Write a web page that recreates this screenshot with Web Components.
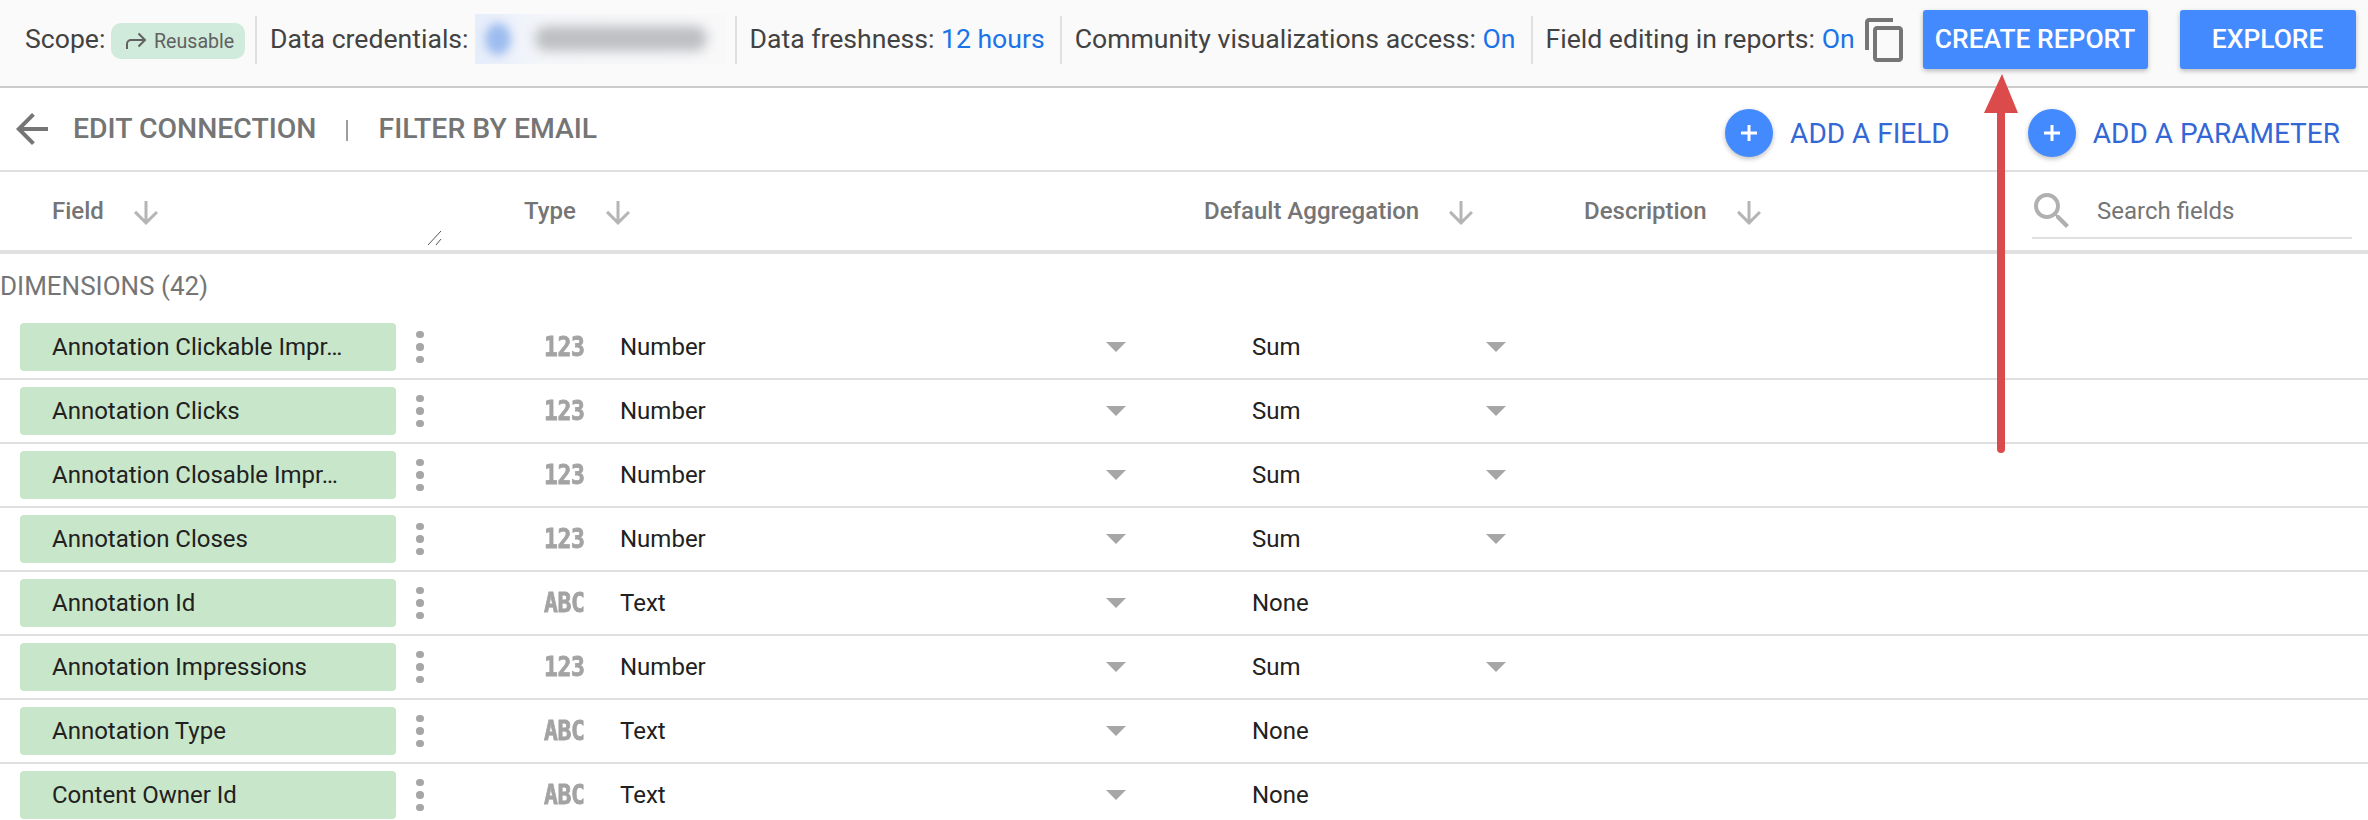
<!DOCTYPE html>
<html><head><meta charset="utf-8"><style>
html,body{margin:0;padding:0;background:#fff;overflow:hidden;width:2368px;height:820px;font-family:Roboto,"Liberation Sans",sans-serif}
</style></head><body>
<dc-page></dc-page>
<script>
const tmpl=(html)=>{const t=document.createElement('template');t.innerHTML=html;return t};
const def=(name,html,init)=>{const t=tmpl(html);customElements.define(name,class extends HTMLElement{connectedCallback(){if(this.shadowRoot)return;const r=this.attachShadow({mode:'open'});r.appendChild(t.content.cloneNode(true));if(init)init(r,this)}})};
const P={copy:'M16 1H4c-1.1 0-2 .9-2 2v14h2V3h12V1zm3 4H8c-1.1 0-2 .9-2 2v14c0 1.1.9 2 2 2h11c1.1 0 2-.9 2-2V7c0-1.1-.9-2-2-2zm0 16H8V7h11v14z',
back:'M20 11H7.83l5.59-5.59L12 4l-8 8 8 8 1.41-1.41L7.83 13H20v-2z',
down:'M20 12l-1.41-1.41L13 16.17V4h-2v12.17l-5.58-5.59L4 12l8 8 8-8z',
search:'M15.5 14h-.79l-.28-.27C15.41 12.59 16 11.11 16 9.5 16 5.91 13.09 3 9.5 3S3 5.91 3 9.5 5.91 16 9.5 16c1.61 0 3.09-.59 4.23-1.57l.27.28v.79l5 4.99L20.49 19l-4.99-5zm-6 0C7.01 14 5 11.99 5 9.5S7.01 5 9.5 5 14 7.01 14 9.5 11.99 14 9.5 14z'};
def('dc-icon',`<style>:host{display:inline-flex;flex:none}svg{display:block;width:var(--s,48px);height:var(--s,48px);fill:var(--c,#757575)}</style><svg viewBox="0 0 24 24"><path></path></svg>`,(r,h)=>r.querySelector('path').setAttribute('d',P[h.getAttribute('name')]));
def('dc-setting',`<style>:host{display:flex;align-items:center;height:48px;padding:0 15px 2px 13px;box-sizing:border-box;border-left:2px solid #e0e0e0;font-size:26.6px;color:#424242;white-space:nowrap;flex:none}</style><slot></slot>`);
def('dc-btn',`<style>:host{display:flex;align-items:center;justify-content:center;height:59px;padding-bottom:2px;background:#448aff;color:#fff;border-radius:3px;font-size:26.4px;font-weight:500;box-shadow:0 2px 5px rgba(0,0,0,.26);box-sizing:border-box;white-space:nowrap;flex:none}</style><slot></slot>`);
def('dc-toolbar',`<style>
:host{display:flex;align-items:center;padding:0 12px 7px 25px;box-sizing:border-box;height:88px;background:#fafafa;border-bottom:2px solid #ccc;font-size:26.6px;color:#424242}
.scope{white-space:nowrap;width:86px;flex:none;margin-bottom:2px}
.chip{display:flex;align-items:center;gap:7px;flex:none;width:134px;height:36px;margin-top:3px;box-sizing:border-box;padding-left:14px;background:#d0ebdb;border-radius:10px;font-size:19.600px;color:#616161;margin-right:10px;white-space:nowrap}
.chip svg{width:22px;height:18px;fill:none;stroke:#616161;stroke-width:2}
.blur{width:251px;height:50px;background:linear-gradient(90deg,#e6edfb,#f6f7fa 30%,#f8f8f9);overflow:hidden;margin:0 -6px 0 6px;display:flex;align-items:center;gap:24px;padding-left:10px;box-sizing:border-box;flex:none}
.b1{width:26px;height:32px;border-radius:50%;background:#9dbcef;filter:blur(5px);flex:none}
.b2{width:172px;height:25px;background:#bdbfc2;border-radius:12px;filter:blur(6px);flex:none}
b{font-weight:400;color:#1a73e8}
.copy{margin-left:-9px;margin-right:14px}
.cr{width:225px}
.ex{width:176px;margin-left:32px}
</style>
<span class="scope">Scope:</span>
<span class="chip"><svg viewBox="0 0 22 18"><path d="M2 17v-5a4 4 0 0 1 4-4h14M13.500 1.500l6.500 6.500-6.500 6.500"/></svg>Reusable</span>
<dc-setting>Data credentials:<span class="blur"><i class="b1"></i><i class="b2"></i></span></dc-setting>
<dc-setting>Data freshness:&nbsp;<b>12 hours</b></dc-setting>
<dc-setting>Community visualizations access:&nbsp;<b>On</b></dc-setting>
<dc-setting>Field editing in reports:&nbsp;<b>On</b></dc-setting>
<dc-icon class="copy" name="copy"></dc-icon>
<dc-btn class="cr">CREATE REPORT</dc-btn>
<dc-btn class="ex">EXPLORE</dc-btn>`);
def('dc-add',`<style>:host{display:flex;align-items:center;gap:17px;font-size:28px;color:#3367d6;white-space:nowrap}
.c{width:48px;height:48px;border-radius:50%;background:#448aff;box-shadow:0 2px 5px rgba(0,0,0,.26);display:flex;align-items:center;justify-content:center}
svg{width:16px;height:16px;fill:#fff}</style>
<span class="c"><svg viewBox="0 0 16 16"><path d="M6.500 0h3v6.500H16v3H9.500V16h-3V9.500H0v-3h6.500z"/></svg></span><slot></slot>`);
def('dc-connbar',`<style>:host{display:flex;align-items:center;height:84px;box-sizing:border-box;border-bottom:2px solid #e0e0e0;padding:0 28px 0 8px;font-size:28.4px;font-weight:500;color:#757575;white-space:nowrap}
.t{margin-left:17px}.tx{margin-bottom:2px}.p{width:2px;height:21px;background:#9e9e9e;margin:3px 31px 0 29px}
.sp{flex:1}dc-add{font-weight:400;margin-top:8px}dc-add+dc-add{margin-left:78px}</style>
<dc-icon name="back"></dc-icon><span class="t tx">EDIT CONNECTION</span><span class="p"></span><span class="tx">FILTER BY EMAIL</span><span class="sp"></span>
<dc-add>ADD A FIELD</dc-add><dc-add>ADD A PARAMETER</dc-add>`);
def('dc-col',`<style>:host{display:flex;align-items:center;gap:var(--g,30px);font-size:24px;font-weight:500;color:#757575;white-space:nowrap}
dc-icon{--s:36px;--c:#b5b5b5;margin-top:3px;margin-left:-6px}</style><slot></slot><dc-icon name="down"></dc-icon>`);
def('dc-header',`<style>:host{display:grid;grid-template-columns:472px 680px 380px 444px 1fr;align-items:center;height:82px;box-sizing:border-box;padding-left:52px;border-bottom:4px solid #e0e0e0;position:relative}
.s{display:flex;align-items:center;font-size:24px;color:#757575;height:68px;box-sizing:border-box;margin:0 16px 0 0;position:relative}
.s::after{content:"";position:absolute;left:4px;right:0;bottom:6px;height:2px;background:#e0e0e0}
.s dc-icon{--c:#b0b0b0;margin-right:21px}
.grip{position:absolute;left:427px;top:58px;width:16px;height:16px}</style>
<dc-col>Field</dc-col><dc-col>Type</dc-col><dc-col>Default Aggregation</dc-col><dc-col>Description</dc-col>
<div class="s"><dc-icon name="search"></dc-icon>Search fields</div>
<svg class="grip" viewBox="0 0 16 16" fill="none" stroke="#555" stroke-width="1"><path d="M1 15L14 1M9 15l5-6"/></svg>`);
def('dc-row',`<style>:host{display:grid;grid-template-columns:376px 48px 100px 76px 486px 20px 126px 234px 20px;align-items:center;height:64px;box-sizing:border-box;padding:0 0 0 20px;border-bottom:2px solid #e0e0e0;font-size:24px;color:#212121;white-space:nowrap}
.chip{height:48px;background:#c8e6c9;border-radius:4px;display:flex;align-items:center;padding-left:32px;box-sizing:border-box;}
.dots{display:flex;flex-direction:column;align-items:center;gap:5px}
.dots i{width:7.500px;height:7.500px;border-radius:50%;background:#a6a6a6}
.g{font-family:"DejaVu Sans Mono",monospace;font-weight:700;font-size:23px;color:#a3a3a3;display:inline-block;transform:scaleY(1.16);letter-spacing:-.3px;-webkit-text-stroke:.7px #a3a3a3}
.tri{width:0;height:0;border:10px solid transparent;border-top:10px solid #a6a6a6;border-bottom:0}
</style>
<div class="chip" id="n"></div><div class="dots"><i></i><i></i><i></i></div><span></span><span class="g" id="g"></span><span id="t"></span><span class="tri"></span><span></span><span id="a"></span><span class="tri" id="at"></span>`,(r,h)=>{
const T=h.getAttribute('type');r.getElementById('n').textContent=h.getAttribute('name');r.getElementById('g').textContent=T=='Number'?'123':'ABC';r.getElementById('t').textContent=T;const A=T=='Number'?'Sum':'None';r.getElementById('a').textContent=A;if(A=='None')r.getElementById('at').style.visibility='hidden'});
def('dc-section',`<style>:host{display:flex;align-items:center;height:62px;font-size:26px;color:#757575;padding-top:1px;box-sizing:border-box}</style><slot></slot>`);
def('dc-page',`<style>:host{display:block;width:2368px;height:820px;overflow:hidden;position:relative;background:#fff}
.a{position:absolute;left:0;top:0;pointer-events:none}</style>
<dc-toolbar></dc-toolbar><dc-connbar></dc-connbar><dc-header></dc-header>
<dc-section>DIMENSIONS (42)</dc-section>
<dc-row name="Annotation Clickable Impr…" type="Number"></dc-row>
<dc-row name="Annotation Clicks" type="Number"></dc-row>
<dc-row name="Annotation Closable Impr…" type="Number"></dc-row>
<dc-row name="Annotation Closes" type="Number"></dc-row>
<dc-row name="Annotation Id" type="Text"></dc-row>
<dc-row name="Annotation Impressions" type="Number"></dc-row>
<dc-row name="Annotation Type" type="Text"></dc-row>
<dc-row name="Content Owner Id" type="Text"></dc-row>
<svg class="a" width="2368" height="820"><path d="M2001 112V449" stroke="#db4b4b" stroke-width="8" stroke-linecap="round" fill="none"/><path d="M2002 74L2018 113H1984Z" fill="#db4b4b"/></svg>`);
</script></body></html>
